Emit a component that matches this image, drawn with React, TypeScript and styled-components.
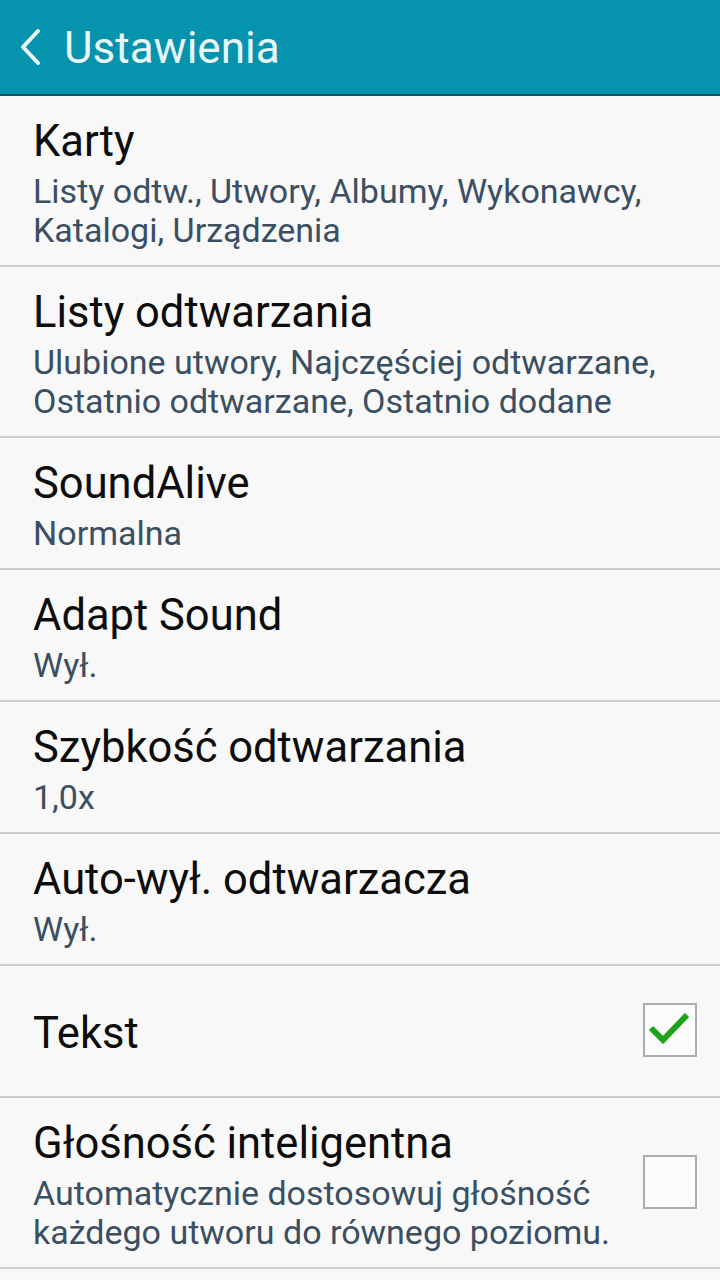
import styled, { createGlobalStyle } from 'styled-components';

const GlobalStyle = createGlobalStyle`
  html, body {
    margin: 0;
    padding: 0;
    background: #f8f8f8;
  }
  body {
    font-family: Roboto, 'Noto Sans', 'Liberation Sans', sans-serif;
  }
`;

const Screen = styled.div`
  width: 720px;
  min-height: 1280px;
  background: #f8f8f8;
`;

const Header = styled.header`
  height: 94px;
  display: flex;
  align-items: center;
  gap: 20px;
  padding-left: 18px;
  background: #0693ad;
  border-bottom: 2px solid #0b5265;
`;

const HeaderTitle = styled.h1`
  margin: 0;
  font-size: 44px;
  font-weight: 400;
  line-height: 50px;
  color: #e9f7f9;
  padding-top: 2px;
`;

const List = styled.div`
  display: flex;
  flex-direction: column;
`;

const Row = styled.div`
  display: flex;
  align-items: center;
  gap: 16px;
  min-height: 132px;
  box-sizing: border-box;
  padding: 21px 23px 15px 33px;
  border-bottom: 2px solid #cbcfd2;
`;

const Texts = styled.div`
  flex: 1;
  display: flex;
  flex-direction: column;
`;

const Title = styled.div`
  font-size: 43.5px;
  line-height: 50px;
  color: #0d0d0d;
`;

const Summary = styled.div`
  margin-top: 5px;
  font-size: 34px;
  line-height: 39px;
  color: #3b4f63;
`;

const Box = styled.div<{ $checked?: boolean }>`
  flex: none;
  width: 54px;
  height: 54px;
  margin-bottom: 8px;
  box-sizing: border-box;
  border: 2px solid #aaaeb1;
  background: #fbfbfb;
  display: flex;
  align-items: center;
  justify-content: center;
`;

const BackIcon = () => (
  <svg width="26" height="40" viewBox="0 0 26 40">
    <path d="M20 4 L5 20 L20 36" fill="none" stroke="#eef9fb" strokeWidth="4" strokeLinecap="round" strokeLinejoin="round" />
  </svg>
);

const Check = () => (
  <svg width="50" height="50" viewBox="0 0 50 50">
    <path d="M6 23 L18 35 L42 10" fill="none" stroke="#1fa31f" strokeWidth="6" strokeLinejoin="miter" />
  </svg>
);

type Item = {
  title: string;
  summary?: string[];
  checkbox?: boolean;
  checked?: boolean;
};

const items: Item[] = [
  { title: 'Karty', summary: ['Listy odtw., Utwory, Albumy, Wykonawcy,', 'Katalogi, Urządzenia'] },
  { title: 'Listy odtwarzania', summary: ['Ulubione utwory, Najczęściej odtwarzane,', 'Ostatnio odtwarzane, Ostatnio dodane'] },
  { title: 'SoundAlive', summary: ['Normalna'] },
  { title: 'Adapt Sound', summary: ['Wył.'] },
  { title: 'Szybkość odtwarzania', summary: ['1,0x'] },
  { title: 'Auto-wył. odtwarzacza', summary: ['Wył.'] },
  { title: 'Tekst', checkbox: true, checked: true },
  {
    title: 'Głośność inteligentna',
    summary: ['Automatycznie dostosowuj głośność', 'każdego utworu do równego poziomu.'],
    checkbox: true,
    checked: false,
  },
];

const App = () => {
  return (
    <Screen>
      <GlobalStyle />
      <Header>
        <BackIcon />
        <HeaderTitle>Ustawienia</HeaderTitle>
      </Header>
      <List>
        {items.map(item => (
          <Row key={item.title}>
            <Texts>
              <Title>{item.title}</Title>
              {item.summary && (
                <Summary>
                  {item.summary.map((line, i) => (
                    <div key={i}>{line}</div>
                  ))}
                </Summary>
              )}
            </Texts>
            {item.checkbox && <Box $checked={item.checked}>{item.checked && <Check />}</Box>}
          </Row>
        ))}
      </List>
    </Screen>
  );
};

export default App;
